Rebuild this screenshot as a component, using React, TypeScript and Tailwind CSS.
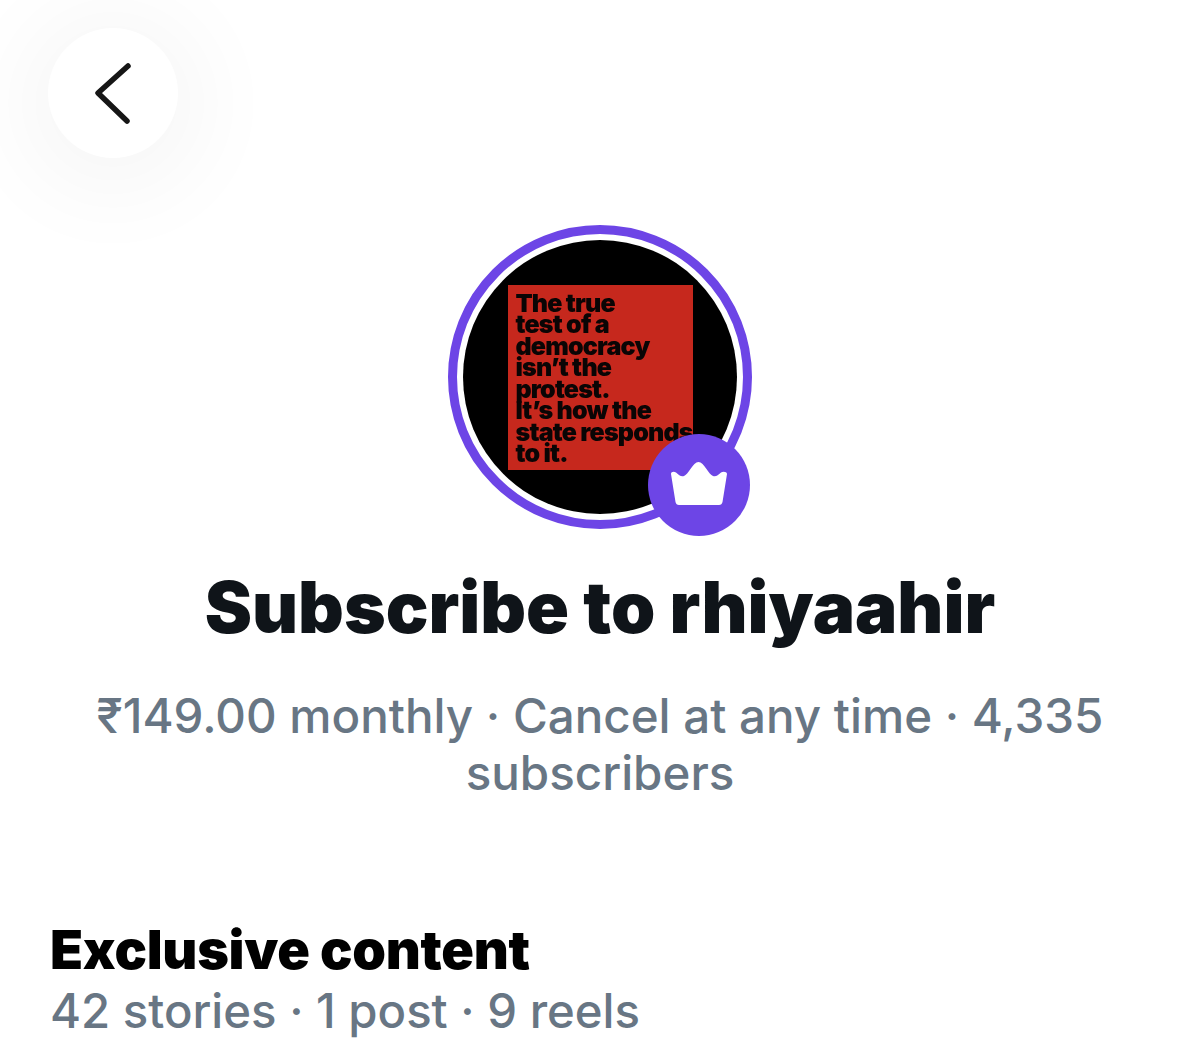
const quote = [
  "The true",
  "test of a",
  "democracy",
  "isn’t the",
  "protest.",
  "It’s how the",
  "state responds",
  "to it.",
];

export default function App() {
  return (
    <div className="w-[1200px] h-[1060px] overflow-hidden bg-white font-['Inter','Liberation_Sans',sans-serif]">
      <div className="pl-12 pt-7">
        <button className="w-[130px] h-[130px] rounded-full bg-white flex items-center justify-center shadow-[0_10px_90px_30px_rgba(0,0,0,0.035)]">
          <svg width="40" height="64" viewBox="0 0 40 64" fill="none" stroke="#161616" strokeWidth="5.5" strokeLinecap="round" strokeLinejoin="round">
            <path d="M35 5 L5 32 L34 60" />
          </svg>
        </button>
      </div>
      <div className="flex flex-col items-center mt-[67px]">
        <div className="relative w-[304px] h-[304px] rounded-full border-[9px] border-[#6d45e6] bg-white p-[6px]">
          <div className="w-full h-full rounded-full bg-black flex items-center justify-center">
            <div className="w-[185px] h-[185px] bg-[#c6281d] pl-[8px] pt-[8px] text-[25px] leading-[21.5px] font-black tracking-[-0.8px] text-[#0a0505] whitespace-nowrap blur-[0.5px]">
              {quote.map((l) => (
                <div key={l}>{l}</div>
              ))}
            </div>
          </div>
          <div className="absolute left-[191px] top-[200px] w-[102px] h-[102px] rounded-full bg-[#6d45e6] flex items-center justify-center">
            <svg width="60" height="48" viewBox="0 0 60 48" fill="#fff">
              <path d="M2 13 C2 10.5 5 10 7 11.5 C10 14 12 16 15 15 C19 14 24 1 29.5 1 C35 1 40 14 44 15 C47 16 49 14 52 11.5 C54 10 58 10.5 58 13 L53.5 41 C53 43 52 44 50 44 H10 C8 44 7 43 6.5 41 Z" />
            </svg>
          </div>
        </div>
        <h1 className="mt-[38px] text-[71px] leading-[80px] font-black text-[#0f1419]">Subscribe to rhiyaahir</h1>
        <p className="mt-[40px] w-[1060px] text-center text-[47.5px] leading-[57px] font-medium text-[#687684]">
          ₹149.00 monthly · Cancel at any time · 4,335 subscribers
        </p>
      </div>
      <div className="pl-[50px] mt-[121px]">
        <h2 className="text-[54px] leading-[56px] font-black text-black tracking-[-0.3px]">Exclusive content</h2>
        <p className="mt-[2px] text-[47.3px] leading-[62px] font-medium text-[#687684]">42 stories · 1 post · 9 reels</p>
      </div>
    </div>
  );
}
